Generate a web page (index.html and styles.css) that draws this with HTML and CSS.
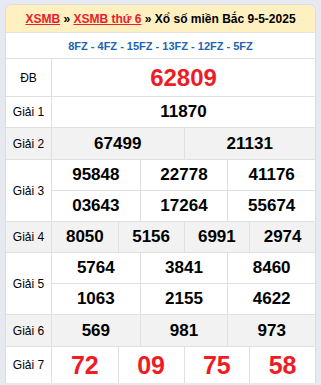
FILE: index.html
```html
<!DOCTYPE html>
<html lang="vi">
<head>
<meta charset="utf-8">
<title>XSMB</title>
<link rel="stylesheet" href="styles.css">
</head>
<body>
<div class="card">
  <div class="head"><a href="#">XSMB</a> » <a href="#">XSMB thứ 6</a> » Xổ số miền Bắc 9-5-2025</div>
  <div class="codes">8FZ - 4FZ - 15FZ - 13FZ - 12FZ - 5FZ</div>
  <div class="row db">
    <div class="label">ĐB</div>
    <div class="nums c1"><div class="n red big">62809</div></div>
  </div>
  <div class="row r30">
    <div class="label">Giải 1</div>
    <div class="nums c1"><div class="n">11870</div></div>
  </div>
  <div class="row gray r31">
    <div class="label">Giải 2</div>
    <div class="nums c2"><div class="n">67499</div><div class="n">21131</div></div>
  </div>
  <div class="row">
    <div class="label">Giải 3</div>
    <div class="nums c3">
      <div class="n">95848</div><div class="n">22778</div><div class="n">41176</div>
      <div class="n">03643</div><div class="n">17264</div><div class="n">55674</div>
    </div>
  </div>
  <div class="row gray r30">
    <div class="label">Giải 4</div>
    <div class="nums c4"><div class="n">8050</div><div class="n">5156</div><div class="n">6991</div><div class="n">2974</div></div>
  </div>
  <div class="row">
    <div class="label">Giải 5</div>
    <div class="nums c3">
      <div class="n">5764</div><div class="n">3841</div><div class="n">8460</div>
      <div class="n">1063</div><div class="n">2155</div><div class="n">4622</div>
    </div>
  </div>
  <div class="row gray r31">
    <div class="label">Giải 6</div>
    <div class="nums c3"><div class="n">569</div><div class="n">981</div><div class="n">973</div></div>
  </div>
  <div class="row g7">
    <div class="label">Giải 7</div>
    <div class="nums c4"><div class="n red big7">72</div><div class="n red big7">09</div><div class="n red big7">75</div><div class="n red big7">58</div></div>
  </div>
</div>
</body>
</html>
```
FILE: styles.css
```css
html, body {
  margin: 0;
  padding: 0;
}
body {
  background: #e6eaf0;
  font-family: "Liberation Sans", Arial, sans-serif;
  color: #000;
}
.card {
  margin: 4px 5px 0 5px;
  border: 1px solid #dcdcdc;
  border-bottom: none;
  border-radius: 7px 7px 0 0;
  background: #fff;
  overflow: hidden;
}
.head {
  height: 27px;
  background: #fff0c2;
  display: flex;
  align-items: center;
  justify-content: center;
  font-weight: bold;
  font-size: 12px;
  white-space: pre;
}
.head a {
  color: #e8212b;
  text-decoration: underline;
}
.codes {
  height: 25px;
  border-top: 1px solid #e3e3e3;
  display: flex;
  align-items: center;
  justify-content: center;
  font-weight: bold;
  font-size: 11px;
  color: #1e64b4;
}
.row {
  display: flex;
  border-top: 1px solid #e0e0e0;
}
.row.gray {
  background: #f2f2f2;
}
.label {
  width: 45px;
  flex: none;
  border-right: 1px solid #e0e0e0;
  display: flex;
  align-items: center;
  justify-content: center;
  font-size: 12px;
}
.nums {
  flex: 1;
  display: grid;
}
.c1 { grid-template-columns: 1fr; }
.c2 { grid-template-columns: repeat(2, 1fr); }
.c3 { grid-template-columns: repeat(3, 1fr); }
.c4 { grid-template-columns: repeat(4, 1fr); }
.n {
  height: 30px;
  display: flex;
  align-items: center;
  justify-content: center;
  font-weight: bold;
  font-size: 17px;
  border-left: 1px solid #e0e0e0;
}
.c1 .n:first-child,
.c2 .n:nth-child(2n+1),
.c3 .n:nth-child(3n+1),
.c4 .n:nth-child(4n+1) {
  border-left: none;
}
.c3 .n:nth-child(n+4) {
  border-top: 1px solid #e0e0e0;
}
.r31 .n { height: 31px; }
.db .n { height: 37px; }
.g7 .n { height: 36px; }
.red { color: #ee1c25; }
.big { font-size: 24px; }
.big7 { font-size: 25px; }
```
